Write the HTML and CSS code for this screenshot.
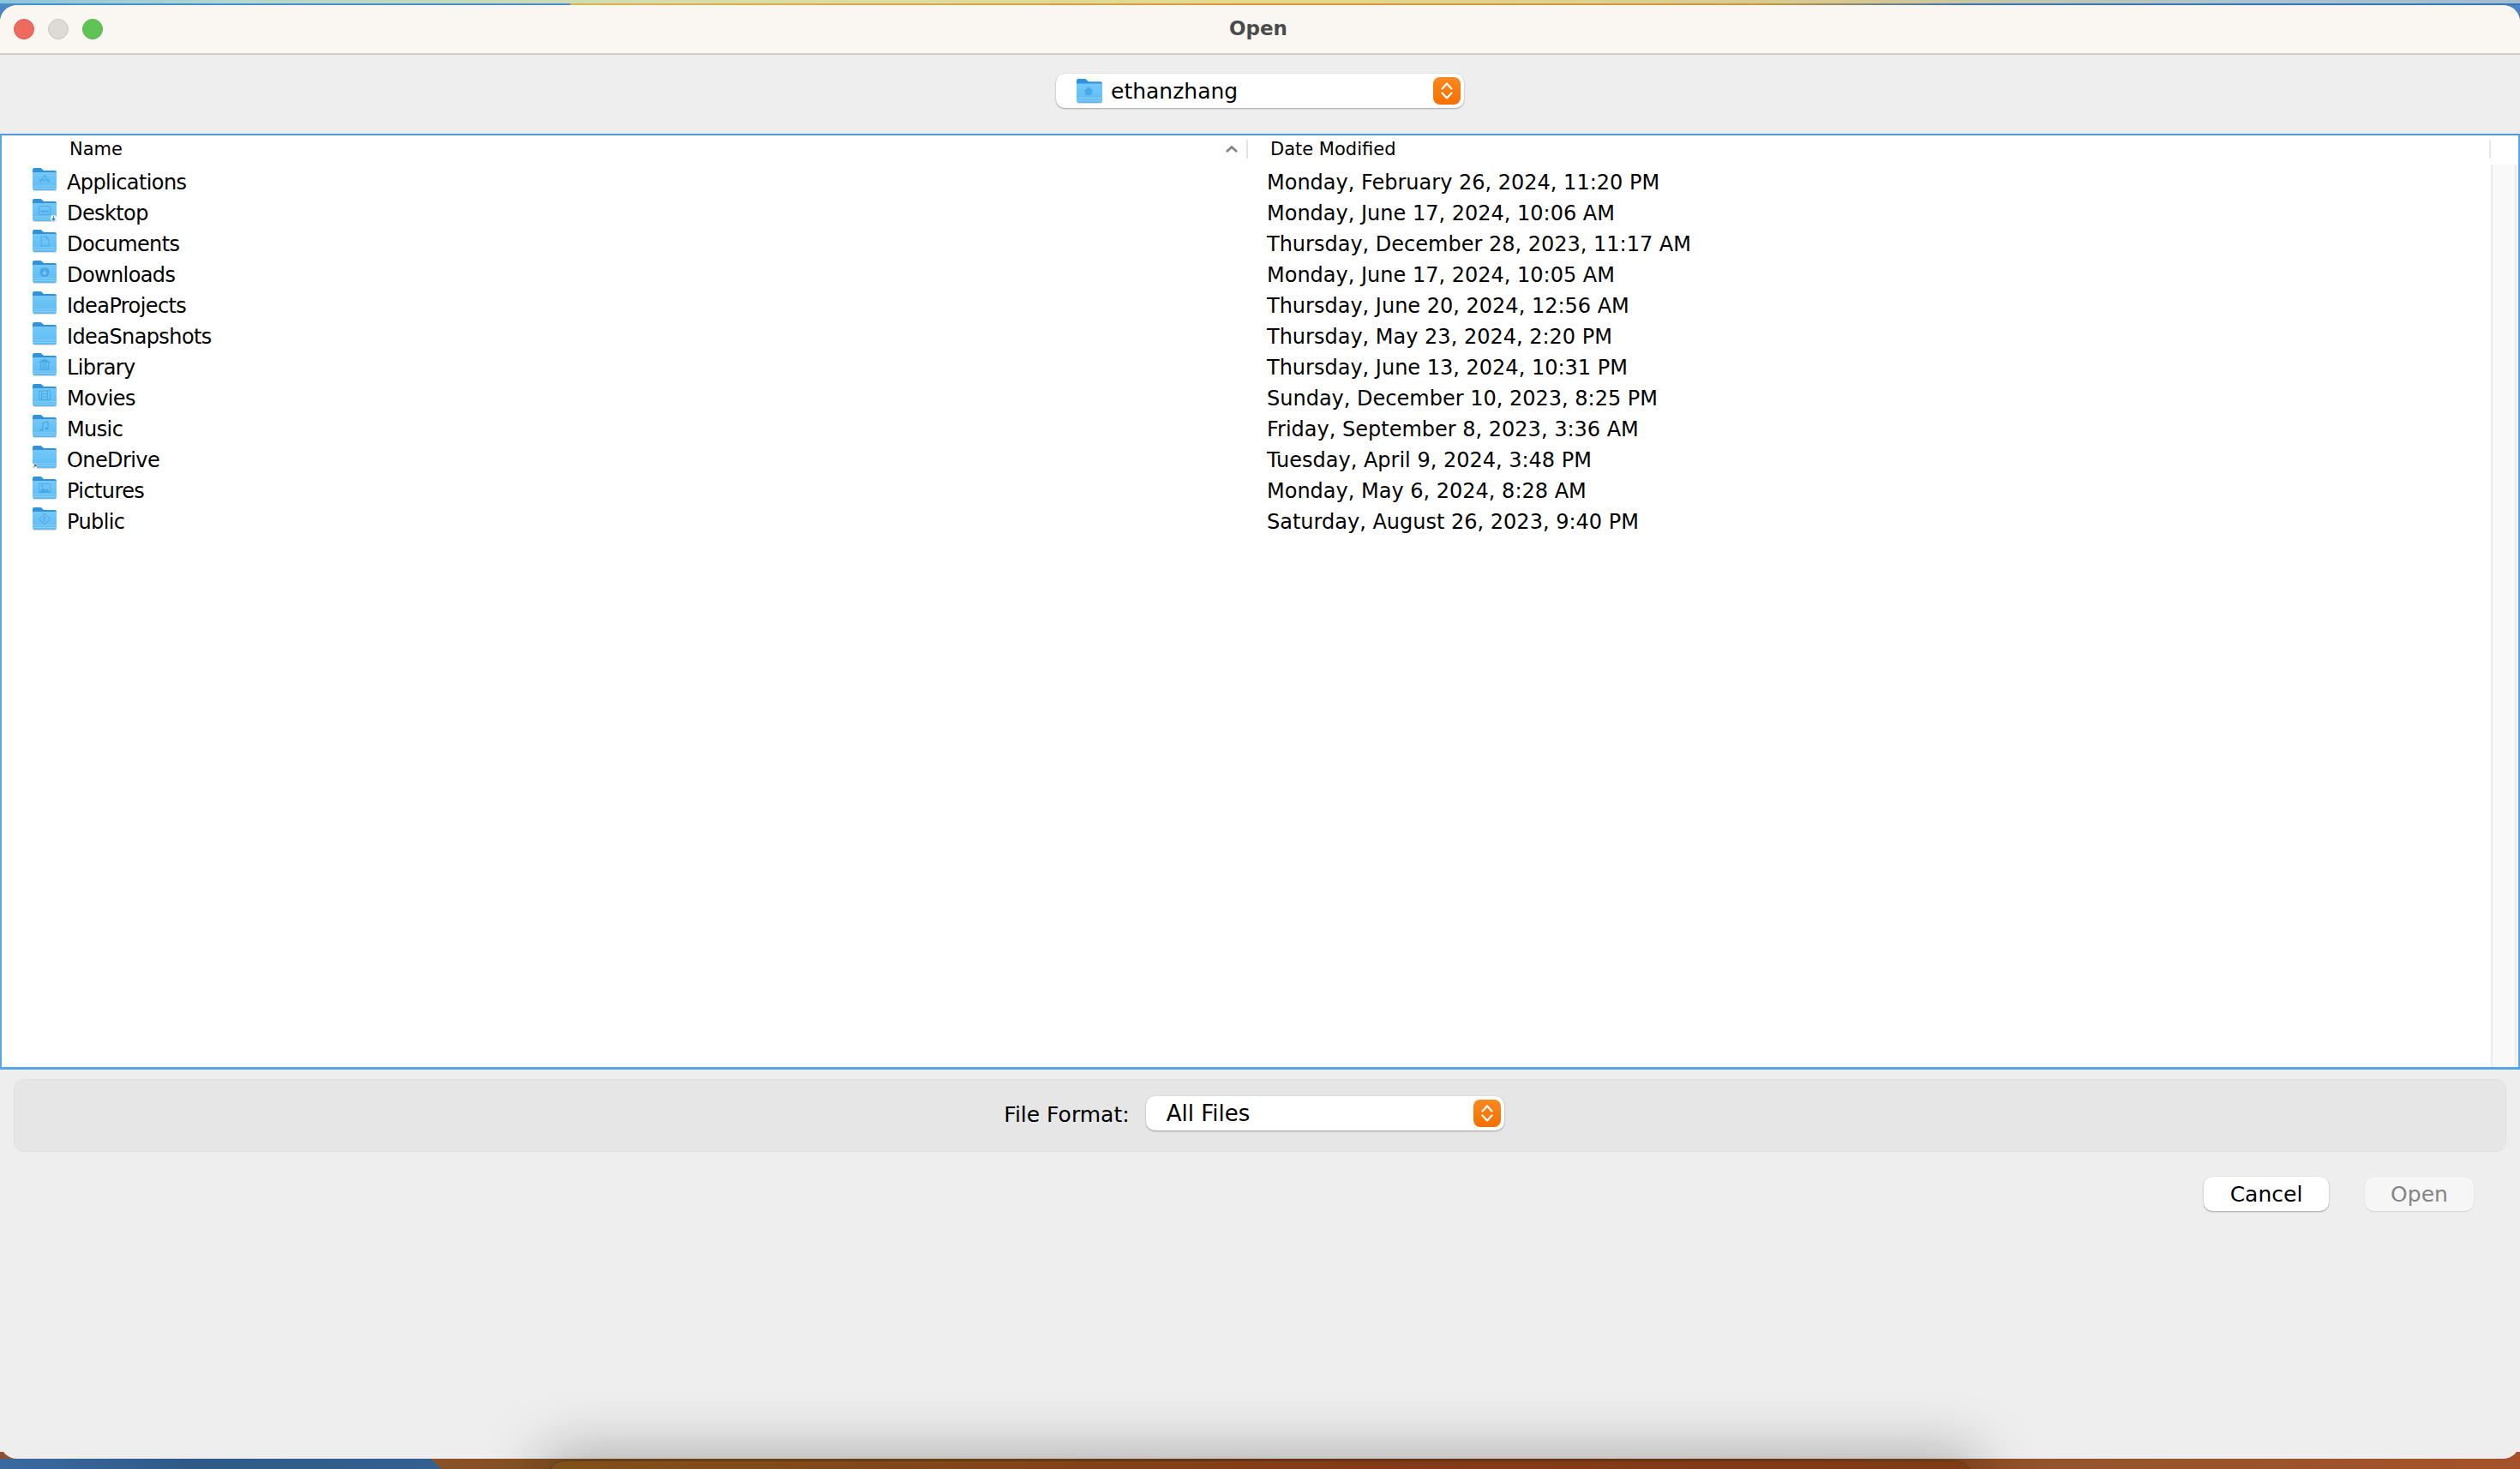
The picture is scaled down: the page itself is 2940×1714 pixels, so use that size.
FILE: index.html
```html
<!DOCTYPE html>
<html>
<head>
	<meta name="viewport" content="width=device-width, initial-scale=1.0">
	<meta charset="utf-8">
	<link rel="stylesheet" href="styles.css">
	<title>Open</title>
</head>
<body>
	<svg class="defs" width="0" height="0">
		<defs>
			<linearGradient id="folderBody" x1="0" y1="0" x2="0" y2="1">
				<stop offset="0" stop-color="#74c8f8"/>
				<stop offset="1" stop-color="#5dbbf2"/>
			</linearGradient>
			<symbol id="folder" viewBox="0 0 28 28">
				<path d="M0 3Q0 1 2 1H9Q10 1 11 2L13 4H26Q28 4 28 6V12H0Z" fill="#2f92dd"/>
				<path d="M0 7Q0 6 1 6H27Q28 6 28 7V25Q28 27 26 27H2Q0 27 0 25Z" fill="url(#folderBody)"/>
				<path d="M0 22H28M0 24.500H28" stroke="#9adafc" stroke-width=".8" opacity=".8"/>
				<path d="M1 27.300H27" stroke="#9a9a9a" stroke-width=".8" opacity=".55"/>
			</symbol>
		</defs>
	</svg>

	<div class="desktop">
		<div class="window">
			<div class="titlebar">
				<div class="lights">
					<span class="light red"></span>
					<span class="light gray"></span>
					<span class="light green"></span>
				</div>
				<div class="title">Open</div>
			</div>

			<div class="toolbar">
				<div class="popup path-popup">
					<svg class="path-icon"><use href="#folder"/><path d="M14 10L8 15.500H10V20H18V15.500H20Z" fill="#3a9fe0" opacity=".7"/></svg>
					<span class="popup-text">ethanzhang</span>
					<span class="stepper"><svg width="14" height="24" viewBox="0 0 14 24"><path d="M1.500 9.500L7 3.500L12.500 9.500M1.500 14.500L7 20.500L12.500 14.500" fill="none" stroke="#fff" stroke-width="2.200" stroke-linecap="round" stroke-linejoin="round"/></svg></span>
				</div>
			</div>

			<div class="browser">
				<div class="list-head">
					<div class="head-name">
						<span>Name</span>
						<svg class="sort" width="16" height="10" viewBox="0 0 16 10"><path d="M2 8L8 2.500L14 8" fill="none" stroke="#808080" stroke-width="2.500"/></svg>
					</div>
					<div class="head-date"><span>Date Modified</span></div>
				</div>
				<div class="list-body">
					<div class="rows">
						<div class="row">
							<div class="cell-name"><svg class="icon"><use href="#folder"/><g fill="none" stroke="#3f9fe0" stroke-width="1.100" opacity=".75"><path d="M14 9L9 18M14 9L19 18M8 15H20"/></g></svg>Applications</div>
							<div class="cell-date">Monday, February 26, 2024, 11:20 PM</div>
						</div>
						<div class="row">
							<div class="cell-name"><svg class="icon"><use href="#folder"/><rect x="7.500" y="9.500" width="13" height="10" rx="1" fill="none" stroke="#3f9fe0" stroke-width="1" opacity=".75"/><path d="M9.500 15.500H18.500" stroke="#3f9fe0" stroke-width="1.500" opacity=".8"/><circle cx="24.500" cy="23.500" r="3.500" fill="#fff"/><path d="M24.500 21V25.500M22.700 24L24.500 26L26.300 24" fill="none" stroke="#2a82e0" stroke-width="1.200"/></svg>Desktop</div>
							<div class="cell-date">Monday, June 17, 2024, 10:06 AM</div>
						</div>
						<div class="row">
							<div class="cell-name"><svg class="icon"><use href="#folder"/><path d="M10 9H16L19 12V20H10ZM16 9V12H19" fill="none" stroke="#3f9fe0" stroke-width="1" opacity=".7"/></svg>Documents</div>
							<div class="cell-date">Thursday, December 28, 2023, 11:17 AM</div>
						</div>
						<div class="row">
							<div class="cell-name"><svg class="icon"><use href="#folder"/><circle cx="14" cy="14.500" r="5.500" fill="#3f9fe0" opacity=".8"/><path d="M14 11.500V17M11.800 15L14 17.200L16.200 15" fill="none" stroke="#8dd4fa" stroke-width="1.100"/></svg>Downloads</div>
							<div class="cell-date">Monday, June 17, 2024, 10:05 AM</div>
						</div>
						<div class="row">
							<div class="cell-name"><svg class="icon"><use href="#folder"/></svg>IdeaProjects</div>
							<div class="cell-date">Thursday, June 20, 2024, 12:56 AM</div>
						</div>
						<div class="row">
							<div class="cell-name"><svg class="icon"><use href="#folder"/></svg>IdeaSnapshots</div>
							<div class="cell-date">Thursday, May 23, 2024, 2:20 PM</div>
						</div>
						<div class="row">
							<div class="cell-name"><svg class="icon"><use href="#folder"/><path d="M14 8L7.500 11.500H20.500ZM8 19H20M7 20.700H21" fill="#3f9fe0" stroke="#3f9fe0" stroke-width="1" opacity=".75"/><path d="M9.500 12.500V18M12.500 12.500V18M15.500 12.500V18M18.500 12.500V18" stroke="#3f9fe0" stroke-width="1.300" opacity=".75"/></svg>Library</div>
							<div class="cell-date">Thursday, June 13, 2024, 10:31 PM</div>
						</div>
						<div class="row">
							<div class="cell-name"><svg class="icon"><use href="#folder"/><rect x="7.500" y="9" width="13" height="10.500" fill="none" stroke="#3f9fe0" stroke-width="1" opacity=".75"/><path d="M10.500 9V19.500M17.500 9V19.500M10.500 12.500H17.500M10.500 16H17.500" stroke="#3f9fe0" stroke-width="1" opacity=".7"/></svg>Movies</div>
							<div class="cell-date">Sunday, December 10, 2023, 8:25 PM</div>
						</div>
						<div class="row">
							<div class="cell-name"><svg class="icon"><use href="#folder"/><path d="M12 18V10.500L18 9V16.500" fill="none" stroke="#3f9fe0" stroke-width="1.100" opacity=".8"/><ellipse cx="10.500" cy="18.500" rx="2" ry="1.500" fill="#3f9fe0" opacity=".8"/><ellipse cx="16.500" cy="17" rx="2" ry="1.500" fill="#3f9fe0" opacity=".8"/></svg>Music</div>
							<div class="cell-date">Friday, September 8, 2023, 3:36 AM</div>
						</div>
						<div class="row">
							<div class="cell-name"><svg class="icon"><use href="#folder"/><rect x="0" y="22.500" width="5" height="5" fill="#fff"/><path d="M1 26.500L3.800 23.700M2 23.500H4V25.500" fill="none" stroke="#222" stroke-width=".9"/></svg>OneDrive</div>
							<div class="cell-date">Tuesday, April 9, 2024, 3:48 PM</div>
						</div>
						<div class="row">
							<div class="cell-name"><svg class="icon"><use href="#folder"/><rect x="7.500" y="9.500" width="13" height="10" fill="none" stroke="#3f9fe0" stroke-width="1" opacity=".7"/><path d="M8 19L12 14L15 17L17 15L20 19Z" fill="#3f9fe0" opacity=".75"/><circle cx="11" cy="12" r="1.200" fill="#3f9fe0" opacity=".75"/></svg>Pictures</div>
							<div class="cell-date">Monday, May 6, 2024, 8:28 AM</div>
						</div>
						<div class="row">
							<div class="cell-name"><svg class="icon"><use href="#folder"/><path d="M14 8L20.500 14.500L14 21L7.500 14.500Z" fill="none" stroke="#3f9fe0" stroke-width="1" opacity=".75"/><path d="M15.500 11.500H13.500V17.500M12.500 14H15" fill="none" stroke="#3f9fe0" stroke-width="1" opacity=".75"/></svg>Public</div>
							<div class="cell-date">Saturday, August 26, 2023, 9:40 PM</div>
						</div>
					</div>
					<div class="scroll-track"></div>
				</div>
			</div>

			<div class="format-panel">
				<span class="format-label">File Format:</span>
				<div class="popup format-popup">
					<span class="popup-text">All Files</span>
					<span class="stepper"><svg width="14" height="24" viewBox="0 0 14 24"><path d="M1.500 9.500L7 3.500L12.500 9.500M1.500 14.500L7 20.500L12.500 14.500" fill="none" stroke="#fff" stroke-width="2.200" stroke-linecap="round" stroke-linejoin="round"/></svg></span>
				</div>
			</div>

			<div class="actions">
				<div class="btn btn-cancel">Cancel</div>
				<div class="btn btn-off">Open</div>
			</div>
		</div>
		<div class="dock"></div>
	</div>
</body>
</html>
```

FILE: styles.css
```css
html, body {
	margin: 0;
	height: 100%;
	overflow: hidden;
}
body {
	font-family: "DejaVu Sans", sans-serif;
	color: #000;
}
.defs {
	position: absolute;
}
.desktop {
	position: relative;
	height: 1714px;
	box-sizing: border-box;
	padding: 6px 0 12px;
	overflow: hidden;
	background:
		linear-gradient(90deg, #8cc4dc 0, #b2d8cf 280px, #d8ddaa 790px, #e6d88a 1500px, #d6c890 2160px, #a9c4d2 2625px, #9fbdd0 100%) top / 100% 4px no-repeat,
		linear-gradient(90deg, #4a90c8 0, #4a90c8 665px, #d9b550 666px, #d39a3e 1500px, #c99a40 2050px, #3d73b0 2300px, #3d73b0 100%) 0 4px / 100% 2px no-repeat,
		linear-gradient(90deg, #4a86c8 0, #4a86c8 40px, transparent 41px, transparent 2900px, #4a86c8 2901px) 0 6px / 100% 24px no-repeat,
		linear-gradient(43deg, #3a6ba0 0, #2f5a88 150px, #33608f 351px, transparent 352px) bottom left / 530px 12px no-repeat,
		linear-gradient(90deg, #8f5230 0, #80501a 1100px, #843a18 1500px, #7f3b16 2000px, #94552a 2400px, #a5522a 100%) bottom / 100% 20px no-repeat,
		#eee;
}
.window {
	position: relative;
	height: 100%;
	display: flex;
	flex-direction: column;
	background-color: #eeeeee;
	border-radius: 20px;
	overflow: hidden;
}
.titlebar {
	position: relative;
	flex: none;
	height: 56px;
	background-color: #faf7f2;
	border-bottom: 2px solid #cfcdca;
	display: flex;
	align-items: center;
	justify-content: center;
}
.lights {
	position: absolute;
	left: 16px;
	top: 16px;
	display: flex;
	gap: 16px;
}
.light {
	width: 24px;
	height: 24px;
	border-radius: 50%;
	box-sizing: border-box;
	border: 1px solid transparent;
}
.red {
	background-color: #ee6a5f;
	border-color: #dd5a50;
}
.gray {
	background-color: #dedbd7;
	border-color: #c9c6c2;
}
.green {
	background-color: #5ec454;
	border-color: #54b44b;
}
.title {
	font-size: 23px;
	font-weight: bold;
	color: #4a4a4a;
	margin-left: -4px;
	margin-top: -2px;
}
.toolbar {
	flex: none;
	height: 92px;
	display: flex;
	align-items: center;
	justify-content: center;
}
.popup {
	display: flex;
	align-items: center;
	box-sizing: border-box;
	height: 40px;
	background-color: #fff;
	border-radius: 10px;
	box-shadow: 0 1px 2px rgba(0, 0, 0, 0.3), 0 0 1px rgba(0, 0, 0, 0.2);
	font-size: 25px;
}
.path-popup {
	width: 476px;
	padding: 0 4px 0 24px;
	margin-top: -8px;
}
.path-icon {
	width: 30px;
	height: 30px;
	margin-right: 10px;
	flex: none;
}
.popup-text {
	flex: 1;
}
.stepper {
	flex: none;
	width: 32px;
	height: 32px;
	border-radius: 8px;
	background: linear-gradient(#f8891f, #f56f00);
	display: flex;
	align-items: center;
	justify-content: center;
}
.browser {
	flex: none;
	height: 1092px;
	box-sizing: border-box;
	border: 2px solid #55a6e8;
	border-top-color: #4c9bdf;
	border-bottom-width: 3px;
	background-color: #fff;
	display: flex;
	flex-direction: column;
}
.list-head {
	flex: none;
	height: 34px;
	padding-top: 5px;
	box-sizing: border-box;
	display: flex;
	font-size: 21px;
}
.head-name {
	width: 1454px;
	box-sizing: border-box;
	padding: 0 9px 0 79px;
	border-right: 2px solid #e4e4e4;
	display: flex;
	align-items: center;
	justify-content: space-between;
	height: 22px;
}
.head-date {
	flex: 1;
	height: 22px;
	margin-right: 32px;
	padding-left: 26px;
	border-right: 2px solid #e8e8e8;
	display: flex;
	align-items: center;
}
.list-body {
	flex: 1;
	display: flex;
	min-height: 0;
}
.rows {
	flex: 1;
	padding-top: 3px;
}
.row {
	display: flex;
	height: 36px;
	align-items: center;
	font-size: 24px;
}
.cell-name {
	width: 1476px;
	flex: none;
	box-sizing: border-box;
	padding-left: 36px;
	display: flex;
	align-items: center;
	letter-spacing: -0.6px;
}
.icon {
	width: 28px;
	height: 28px;
	margin-right: 12px;
	flex: none;
	margin-top: -8px;
}
.scroll-track {
	flex: none;
	width: 30px;
	margin-right: 2px;
	box-sizing: border-box;
	background-color: #f9f9f9;
	border-left: 2px solid #ececec;
	border-right: 2px solid #ececec;
}
.format-panel {
	flex: none;
	margin: 11px 16px 0;
	height: 85px;
	box-sizing: border-box;
	padding-right: 14px;
	background-color: #e6e6e6;
	border: 1px solid #e0e0e0;
	border-radius: 12px;
	display: flex;
	align-items: center;
	justify-content: center;
	gap: 19px;
	font-size: 25px;
}
.format-label {
	margin-top: -2px;
}
.format-popup {
	width: 418px;
	padding: 0 4px 0 24px;
	margin-top: -6px;
	font-size: 26px;
}
.actions {
	flex: none;
	display: flex;
	justify-content: flex-end;
	gap: 42px;
	padding: 29px 54px 0 0;
}
.btn {
	height: 40px;
	box-sizing: border-box;
	background-color: #fff;
	border-radius: 10px;
	box-shadow: 0 1px 2px rgba(0, 0, 0, 0.3), 0 0 1px rgba(0, 0, 0, 0.2);
	font-size: 25px;
	display: flex;
	align-items: center;
	justify-content: center;
}
.btn-cancel {
	width: 146px;
}
.btn-off {
	width: 127px;
	background-color: #f6f6f6;
	color: #858585;
	box-shadow: 0 1px 1px rgba(0, 0, 0, 0.1), 0 0 1px rgba(0, 0, 0, 0.12);
}
/* dock sits behind the window but its shadow falls on it */
.dock {
	position: absolute;
	left: 640px;
	right: 640px;
	top: 1704px;
	height: 60px;
	border-radius: 18px;
	border: 1px solid #5c3a14;
	box-shadow: 0 0 70px 10px rgba(0, 0, 0, 0.28);
	background: linear-gradient(90deg, #80501a, #843a18 60%, #7f3b16);
}
```
